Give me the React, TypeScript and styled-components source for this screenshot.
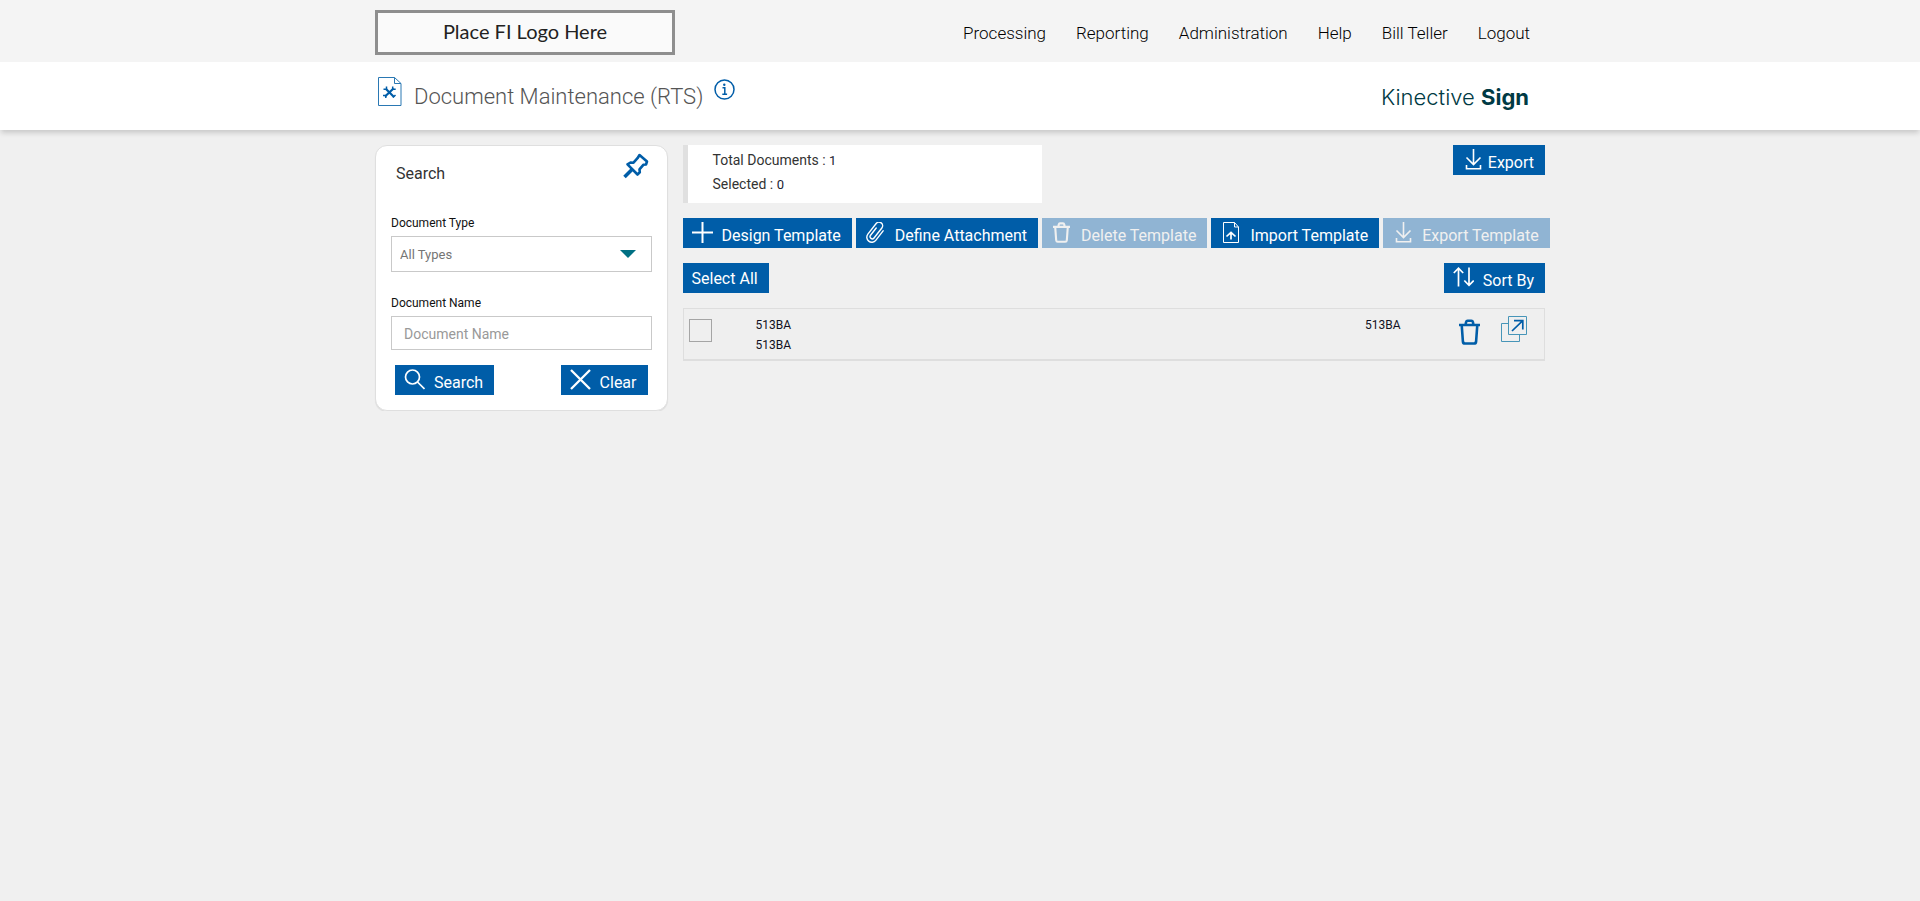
import React from "react";
import styled, { createGlobalStyle } from "styled-components";

const BLUE = "#005da8";

const GlobalStyle = createGlobalStyle`
  *, *::before, *::after { box-sizing: border-box; }
  body {
    margin: 0;
    background: #f0f0f0;
    color: #222;
    font-family: Roboto, "Liberation Sans", sans-serif;
    font-size: 14px;
  }
  button, input, select { font-family: inherit; }
`;

const Container = styled.div`
  width: 100%;
  max-width: 1170px;
  margin: 0 auto;
  display: flex;
  justify-content: space-between;
`;

const TopBar = styled.header`
  background: #f4f4f4;
  height: 62px;
`;

const TopInner = styled(Container)`
  padding-top: 10px;
`;

const LogoBox = styled.div`
  width: 300px;
  height: 45px;
  border: 3px solid #8e8e8e;
  background: #fafafa;
  color: #222;
  font: 400 20px/37px Lato, sans-serif;
  text-align: center;
`;

const Nav = styled.nav`
  display: flex;
  gap: 30px;
  padding: 0 15px;
  line-height: 46px;
`;

const NavLink = styled.a`
  color: #000;
  font-size: 17px;
  font-weight: 300;
  text-decoration: none;
`;

const TitleBar = styled.div`
  background: #fff;
  height: 68px;
  box-shadow: 0 4px 5px -1px rgba(0, 0, 0, 0.16);
`;

const TitleGroup = styled.div`
  display: flex;
  align-items: flex-start;
  padding: 15px 0 0 3px;
`;

const Title = styled.h1`
  margin: 5px 11px 0 12px;
  color: #555;
  font-size: 22px;
  font-weight: 300;
  line-height: 30px;
`;

const IconButton = styled.button`
  display: inline-flex;
  padding: 0;
  border: 0;
  background: none;
  color: ${BLUE};
  cursor: pointer;
`;

const InfoButton = styled(IconButton)`
  padding-top: 2px;
`;

const Brand = styled.div`
  padding: 20px 16px 0;
  color: #003a44;
  font: 300 22px/30px Inter, sans-serif;

  strong { font-weight: 700; }
`;

const Content = styled(Container)`
  padding-top: 15px;
  gap: 15px;
  align-items: flex-start;
`;

const SearchCard = styled.form`
  flex: 0 0 25%;
  padding: 0 15px 15px;
  border: 1px solid #dfdfdf;
  border-radius: 12px;
  background: #fff;
  box-shadow: 0 1px 1px rgba(0, 0, 0, 0.08);
`;

const CardHead = styled.div`
  display: flex;
  justify-content: space-between;
  height: 69px;
  padding: 7px 3px 0 5px;
`;

const CardTitle = styled.h2`
  margin: 9px 0 0;
  color: #333;
  font-size: 16px;
  font-weight: 400;
  line-height: 24px;
`;

const Label = styled.label`
  display: block;
  color: #111;
  font-size: 12px;
  line-height: 16px;
  margin-bottom: 5px;
`;

const SelectWrap = styled.div`
  display: grid;
  align-items: center;
  margin-bottom: 23px;

  > * { grid-area: 1 / 1; }
  > svg { justify-self: end; margin-right: 16px; pointer-events: none; }
`;

const Select = styled.select`
  appearance: none;
  width: 100%;
  height: 36px;
  padding: 0 8px;
  border: 1px solid #c9c9c9;
  border-radius: 0;
  background: #fff;
  color: #757575;
  font-size: 13px;
`;

const TextInput = styled.input`
  display: block;
  width: 100%;
  height: 34px;
  padding: 2px 12px 0;
  border: 1px solid #c9c9c9;
  background: #fff;
  font-size: 14px;

  &::placeholder { color: #999; opacity: 1; }
`;

const CardActions = styled.div`
  display: flex;
  justify-content: space-between;
  padding: 15px 4px 0;
`;

const Button = styled.button<{ $gap?: number }>`
  display: inline-flex;
  align-items: flex-start;
  flex: none;
  gap: ${(p) => p.$gap ?? 9}px;
  height: 30px;
  padding: 4px 11px 0 9px;
  border: 0;
  background: ${BLUE};
  color: #fff;
  font-size: 16px;
  line-height: 28px;
  white-space: nowrap;
  cursor: pointer;

  &:disabled { background: #90b4d3; color: #f0f0f0; }
`;

const PlainButton = styled(Button)`
  padding-top: 2px;
`;

const Main = styled.main`
  flex: 1;
  min-width: 0;
`;

const Bar = styled.div`
  display: flex;
  justify-content: space-between;
  align-items: flex-start;
  margin-bottom: 15px;
`;

const Toolbar = styled.div`
  display: flex;
  gap: 4px;
  margin-bottom: 15px;
`;

const Summary = styled.div`
  width: 359px;
  height: 58px;
  padding: 3px 0 0 25px;
  border-left: 5px solid #e0e0e0;
  background: #fff;
  color: #333;
  font-size: 14px;
  line-height: 24px;

  p { margin: 0; }
  span { font-size: 13px; line-height: 1; color: #223; }
`;

const Row = styled.div`
  display: flex;
  align-items: flex-start;
  height: 53px;
  padding: 6px 17px 0 5px;
  border: 1px solid #dedede;
  border-bottom-width: 2px;
  background: #efefef;
`;

const Check = styled.input`
  appearance: none;
  flex: none;
  width: 23px;
  height: 23px;
  margin: 4px 44px 0 0;
  border: 1px solid #a5a5a5;

  &:checked { background: ${BLUE}; }
`;

const Names = styled.div`
  flex: 1;
  color: #112;
  font-size: 12px;
  line-height: 20px;
`;

const Code = styled.div`
  width: 94px;
  color: #112;
  font-size: 12px;
  line-height: 20px;
`;

const RowActions = styled.div`
  display: flex;
  align-items: flex-start;
  gap: 21px;
  padding-top: 1px;

  button:first-child { padding-top: 3px; }
`;

const Svg = styled.svg.attrs({ "aria-hidden": true, fill: "none", stroke: "currentColor" })`
  display: block;
  flex: none;
`;

const PlusIcon = () => (
  <Svg width="21" height="21" strokeWidth="2"><path d="M10.5 0v21M0 10.5h21" /></Svg>
);
const ClipIcon = () => (
  <Svg width="21" height="21" strokeWidth="1.4" strokeLinecap="round">
    <path
      transform="rotate(38 10.5 10.5)"
      d="M8.300 6.500v9.200a2.200 2.200 0 0 0 4.400 0V3a3.600 3.600 0 0 0-7.200 0v13.500a5 5 0 0 0 10 0V4.500"
    />
  </Svg>
);
const TrashIcon = ({ w = 21, h = 21 }: { w?: number; h?: number }) => (
  <Svg width={w} height={h} viewBox="0 0 21 26" strokeWidth="2.600" strokeLinejoin="round">
    <path d="M0 6h21M6.500 6l.600-3q.300-1.300 1.500-1.300h3.800q1.200 0 1.500 1.300l.600 3M2.700 6l1.200 16.500q.2 2 2 2h9.200q1.800 0 2-2L18.300 6" />
  </Svg>
);
const ImportIcon = () => (
  <Svg width="21" height="21" strokeWidth="1">
    <path d="M3.500.5h11l4 4.500v15.500h-15zM14.500.5V5h4" />
    <path strokeWidth="1.700" d="M11 17.500v-7M6.500 14.500 11 10.300l4.500 4.200" />
  </Svg>
);
const DownloadIcon = () => (
  <Svg width="21" height="21" strokeWidth="1.600">
    <path d="M11.500 0v15.500M4.500 8.500l7 7 7-7M4.500 16v3.800h14V16" />
  </Svg>
);
const SearchIcon = () => (
  <Svg width="21" height="21" strokeWidth="1.700"><circle cx="8.500" cy="8" r="7" /><path d="m13.500 13 7 7" /></Svg>
);
const CloseIcon = () => (
  <Svg width="21" height="21" strokeWidth="2.300"><path d="m1 1 19 19M20 1 1 20" /></Svg>
);
const SortIcon = () => (
  <Svg width="21" height="21" strokeWidth="1.700">
    <path d="M5.500 19.500V1.500M.8 6l4.700-4.800L10.200 6M16 .5v17.500M11.300 13.500l4.700 4.800 4.700-4.800" />
  </Svg>
);
const OpenIcon = () => (
  <Svg width="26" height="26" strokeWidth="1">
    <path stroke="#4795b8" d="M7.500 7.500h-7v18h18v-7M7.500.5h18v18h-18z" />
    <path strokeWidth="1.700" d="M11 15 21.500 4.800M13 4.700h8.800v8.800" />
  </Svg>
);
const PinIcon = () => (
  <Svg width="26" height="26" strokeWidth="2.600" strokeLinejoin="round">
    <path d="M16.500 2 24 8.500l-1 3-2.700.3-3.800 4.500.3 3-2.300 2.200L4.500 11.300l3-1.800 3 .2 4-4.500z" />
    <path strokeWidth="3.600" d="M9.500 16 1.500 24" />
  </Svg>
);
const InfoIcon = () => (
  <Svg width="21" height="21" strokeWidth="1.500">
    <circle cx="10.500" cy="10.500" r="9.500" />
    <path d="M8.500 8.700h2.300v6.500M8.300 15.200h4.800" />
    <circle cx="10.300" cy="5.700" r="1.200" fill="currentColor" stroke="none" />
  </Svg>
);
const DocumentIcon = () => (
  <Svg width="24" height="29" strokeWidth="1" color={BLUE}>
    <path stroke="#2a78b3" d="M.5.500h16l6.500 6v22H.5zM16.500.500v6H23" />
    <path strokeWidth="2.200" d="M7 19.500 15.500 11.500M8 12l8 8" />
    <path strokeWidth="1.500" d="M5.500 12.300h3V9.500M14.700 9.500v2.800h3M5 18.500h2.800v2.500M15 20.500l2.500-2.500" />
  </Svg>
);
const Caret = () => (
  <svg width="16" height="8" aria-hidden="true"><path d="M0 0h16L8 8z" fill="#007083" /></svg>
);

const NAV = ["Processing", "Reporting", "Administration", "Help", "Bill Teller", "Logout"];

export default function App() {
  return (
    <>
      <GlobalStyle />
      <TopBar>
        <TopInner>
          <LogoBox>Place FI Logo Here</LogoBox>
          <Nav>
            {NAV.map((item) => <NavLink href="#" key={item}>{item}</NavLink>)}
          </Nav>
        </TopInner>
      </TopBar>
      <TitleBar>
        <Container>
          <TitleGroup>
            <DocumentIcon />
            <Title>Document Maintenance (RTS)</Title>
            <InfoButton aria-label="Information"><InfoIcon /></InfoButton>
          </TitleGroup>
          <Brand>Kinective <strong>Sign</strong></Brand>
        </Container>
      </TitleBar>
      <Content>
        <SearchCard onSubmit={(e) => e.preventDefault()}>
          <CardHead>
            <CardTitle>Search</CardTitle>
            <IconButton type="button" aria-label="Pin search"><PinIcon /></IconButton>
          </CardHead>
          <Label htmlFor="type">Document Type</Label>
          <SelectWrap>
            <Select id="type"><option>All Types</option></Select>
            <Caret />
          </SelectWrap>
          <Label htmlFor="name">Document Name</Label>
          <TextInput id="name" placeholder="Document Name" />
          <CardActions>
            <Button type="submit"><SearchIcon />Search</Button>
            <Button type="reset"><CloseIcon />Clear</Button>
          </CardActions>
        </SearchCard>
        <Main>
          <Bar>
            <Summary>
              <p>Total Documents : <span>1</span></p>
              <p>Selected : <span>0</span></p>
            </Summary>
            <Button $gap={5}><DownloadIcon />Export</Button>
          </Bar>
          <Toolbar>
            <Button><PlusIcon />Design Template</Button>
            <Button><ClipIcon />Define Attachment</Button>
            <Button disabled><TrashIcon />Delete Template</Button>
            <Button><ImportIcon />Import Template</Button>
            <Button disabled><DownloadIcon />Export Template</Button>
          </Toolbar>
          <Bar>
            <PlainButton>Select All</PlainButton>
            <Button><SortIcon />Sort By</Button>
          </Bar>
          <Row>
            <Check type="checkbox" aria-label="Select 513BA" />
            <Names><div>513BA</div><div>513BA</div></Names>
            <Code>513BA</Code>
            <RowActions>
              <IconButton aria-label="Delete"><TrashIcon w={21} h={26} /></IconButton>
              <IconButton aria-label="Open"><OpenIcon /></IconButton>
            </RowActions>
          </Row>
        </Main>
      </Content>
    </>
  );
}
